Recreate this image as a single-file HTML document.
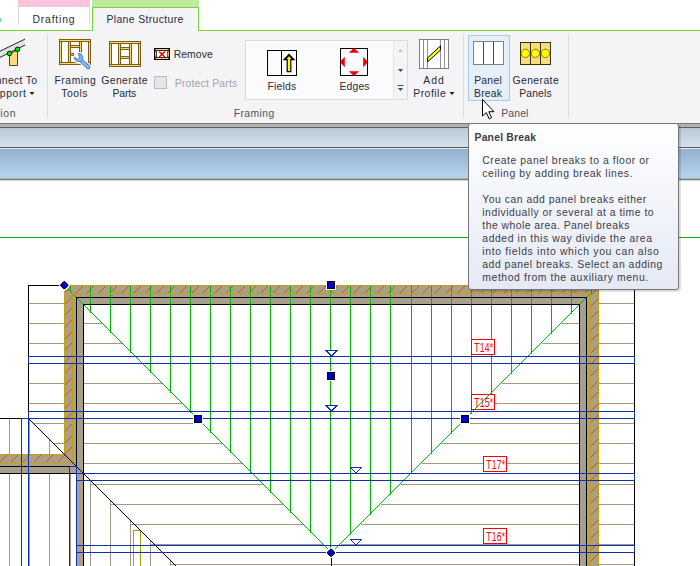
<!DOCTYPE html>
<html><head><meta charset="utf-8"><title>Panel Break</title>
<style>
html,body{margin:0;padding:0;background:#fff;}
body{width:700px;height:566px;overflow:hidden;}
svg{display:block;font-family:"Liberation Sans",sans-serif;}
</style></head><body>
<svg width="700" height="566" viewBox="0 0 700 566">
<defs>
<linearGradient id="g1" x1="0" y1="0" x2="0" y2="1"><stop offset="0" stop-color="#BAC8D8"/><stop offset="1" stop-color="#D6E1EC"/></linearGradient>
<linearGradient id="g2" x1="0" y1="0" x2="0" y2="1"><stop offset="0" stop-color="#93B1D0"/><stop offset="1" stop-color="#B7D4EE"/></linearGradient>
<linearGradient id="g3" x1="0" y1="0" x2="0" y2="1"><stop offset="0" stop-color="#FFFFFF"/><stop offset="1" stop-color="#E4E9F5"/></linearGradient>
<clipPath id="hc"><path d="M65 292L71 286H598V566H591V294H72V462H0V455H65Z"/></clipPath>
</defs>
<rect x="0" y="0" width="700" height="566" fill="#fff"/>
<g id="drawing">
<path d="M0 237.5H700" stroke="#00B400" stroke-width="1" fill="none" />
<path d="M29 303.5H64M29 323.5H64M29 343.5H64M29 363.5H64M29 383.5H64M29 403.5H64M34 423.5H64M54 443.5H64M599 303.5H634M599 323.5H634M599 343.5H634M599 363.5H634M599 383.5H634M599 403.5H634M599 423.5H634M599 443.5H634M599 463.5H634M599 484.5H634M599 504.5H634M599 524.5H634M599 544.5H634M599 564.5H634M84 323.5H101.5M561.5 323.5H579M84 343.5H121.5M541.5 343.5H579M84 363.5H141.5M521.5 363.5H579M84 383.5H161.5M501.5 383.5H579M84 403.5H181.5M481.5 403.5H579M84 423.5H201.5M461.5 423.5H579M84 443.5H221.5M441.5 443.5H579M84 463.5H241.5M421.5 463.5H579M90.6 484.5H262.5M400.5 484.5H579M110.7 504.5H282.5M380.5 504.5H579M130.8 524.5H302.5M360.5 524.5H579M150.9 544.5H322.5M340.5 544.5H579M171 564.5H579M90.5 480V566M110.5 500V566M130.5 520V566M150.5 540V566M170.5 560V566M9.5 419V454M29.5 419V454M49.5 439V454M9.5 474V566M29.5 474V566M49.5 474V566M70.5 474V566" stroke="#A09880" stroke-width="1" fill="none" shape-rendering="crispEdges"/>
<path d="M133.5 530V566M140.5 530V566M133 530.5H141" stroke="#A8A000" stroke-width="1" fill="none" shape-rendering="crispEdges"/>
<g shape-rendering="crispEdges">
<path fill="#A8A08C" d="M64 291L70 285H599V566H579V305H84V566H77V474H0V454H64Z"/>
</g>
<g clip-path="url(#hc)"><path d="M75.5 293.5L83.5 285.5M86.5 293.5L94.5 285.5M98.5 293.5L106.5 285.5M109.5 293.5L117.5 285.5M121.5 293.5L129.5 285.5M133.5 293.5L141.5 285.5M144.5 293.5L152.5 285.5M156.5 293.5L164.5 285.5M167.5 293.5L175.5 285.5M179.5 293.5L187.5 285.5M191.5 293.5L199.5 285.5M202.5 293.5L210.5 285.5M214.5 293.5L222.5 285.5M225.5 293.5L233.5 285.5M237.5 293.5L245.5 285.5M248.5 293.5L256.5 285.5M260.5 293.5L268.5 285.5M272.5 293.5L280.5 285.5M283.5 293.5L291.5 285.5M295.5 293.5L303.5 285.5M306.5 293.5L314.5 285.5M318.5 293.5L326.5 285.5M330.5 293.5L338.5 285.5M341.5 293.5L349.5 285.5M353.5 293.5L361.5 285.5M364.5 293.5L372.5 285.5M376.5 293.5L384.5 285.5M387.5 293.5L395.5 285.5M399.5 293.5L407.5 285.5M411.5 293.5L419.5 285.5M422.5 293.5L430.5 285.5M434.5 293.5L442.5 285.5M445.5 293.5L453.5 285.5M457.5 293.5L465.5 285.5M469.5 293.5L477.5 285.5M480.5 293.5L488.5 285.5M492.5 293.5L500.5 285.5M503.5 293.5L511.5 285.5M515.5 293.5L523.5 285.5M526.5 293.5L534.5 285.5M538.5 293.5L546.5 285.5M550.5 293.5L558.5 285.5M561.5 293.5L569.5 285.5M573.5 293.5L581.5 285.5M584.5 293.5L592.5 285.5M64.5 292.5L72.5 284.5M64.5 304.5L72.5 296.5M64.5 315.5L72.5 307.5M64.5 327.5L72.5 319.5M64.5 339.5L72.5 331.5M64.5 350.5L72.5 342.5M64.5 362.5L72.5 354.5M64.5 373.5L72.5 365.5M64.5 385.5L72.5 377.5M64.5 396.5L72.5 388.5M64.5 408.5L72.5 400.5M64.5 420.5L72.5 412.5M64.5 431.5L72.5 423.5M64.5 443.5L72.5 435.5M64.5 454.5L72.5 446.5M590.5 295.5L598.5 287.5M590.5 306.5L598.5 298.5M590.5 318.5L598.5 310.5M590.5 330.5L598.5 322.5M590.5 341.5L598.5 333.5M590.5 353.5L598.5 345.5M590.5 364.5L598.5 356.5M590.5 376.5L598.5 368.5M590.5 388.5L598.5 380.5M590.5 399.5L598.5 391.5M590.5 411.5L598.5 403.5M590.5 422.5L598.5 414.5M590.5 434.5L598.5 426.5M590.5 446.5L598.5 438.5M590.5 457.5L598.5 449.5M590.5 469.5L598.5 461.5M590.5 480.5L598.5 472.5M590.5 492.5L598.5 484.5M590.5 503.5L598.5 495.5M590.5 515.5L598.5 507.5M590.5 527.5L598.5 519.5M590.5 538.5L598.5 530.5M590.5 550.5L598.5 542.5M590.5 561.5L598.5 553.5M590.5 573.5L598.5 565.5M-0.5 462.5L7.5 454.5M10.5 462.5L18.5 454.5M22.5 462.5L30.5 454.5M33.5 462.5L41.5 454.5M45.5 462.5L53.5 454.5M57.5 462.5L65.5 454.5" stroke="#D05800" stroke-width="1" fill="none" shape-rendering="crispEdges"/></g>
<path d="M90.5 286V312.5M110.5 286V332.5M130.5 286V352.5M150.5 286V372.5M170.5 286V392.5M190.5 286V412.5M210.5 286V432.5M230.5 286V452.5M250.5 286V472.5M270.5 286V492.5M290.5 286V512.5M310.5 286V532.5M330.5 286V552.5M350.5 286V534.5M370.5 286V514.5M390.5 286V494.5M411.5 286V473.5M431.5 286V453.5M451.5 286V433.5M471.5 286V413.5M491.5 286V393.5M511.5 286V373.5M531.5 286V353.5M551.5 286V333.5M571.5 286V313.5M591.5 289V294M70.5 286V291" stroke="#00B400" stroke-width="1" fill="none" shape-rendering="crispEdges"/>
<rect x="471.5" y="339.5" width="23" height="15" fill="#fff" stroke="#FF0000" stroke-width="1" shape-rendering="crispEdges"/><text transform="translate(474.2 351.6) scale(0.72 1)" font-size="12" fill="#FF0000" textLength="26.4" lengthAdjust="spacing">T14*</text>
<rect x="471.5" y="394.5" width="23" height="15" fill="#fff" stroke="#FF0000" stroke-width="1" shape-rendering="crispEdges"/><text transform="translate(474.2 406.6) scale(0.72 1)" font-size="12" fill="#FF0000" textLength="26.4" lengthAdjust="spacing">T15*</text>
<rect x="483.5" y="456.5" width="23" height="15" fill="#fff" stroke="#FF0000" stroke-width="1" shape-rendering="crispEdges"/><text transform="translate(486.2 468.6) scale(0.72 1)" font-size="12" fill="#FF0000" textLength="26.4" lengthAdjust="spacing">T17*</text>
<rect x="483.5" y="528.5" width="23" height="15" fill="#fff" stroke="#FF0000" stroke-width="1" shape-rendering="crispEdges"/><text transform="translate(486.2 540.6) scale(0.72 1)" font-size="12" fill="#FF0000" textLength="26.4" lengthAdjust="spacing">T16*</text>
<path d="M66.5 287.5L331.5 552.5M331.5 552.5L591.5 292.5" stroke="#00B400" stroke-width="1" fill="none" shape-rendering="crispEdges"/>
<path d="M65.5 291.5L70.5 286.5" stroke="#D05800" stroke-width="1" shape-rendering="crispEdges"/>
<path d="M70 285.5H599M64.5 291.5L70.5 285.5M64.5 291V455M0 454.5H65M598.5 285V566M72 293.5H591M72.5 293V463M0 462.5H73M590.5 293V566" stroke="#C8A000" stroke-width="1" fill="none" shape-rendering="crispEdges"/>
<path d="M76 297.5H587M76.5 297V467M0 466.5H77M586.5 297V566M83 304.5H580M83.5 304V566M579.5 304V566M0 473.5H77M28.5 285V419M28 285.5H60M0 418.5H22M634.5 285V566M599 285.5H635M28.5 418.5L177 567M331.5 558V566" stroke="#000000" stroke-width="1" fill="none" shape-rendering="crispEdges"/>
<path d="M28 356.5H635M28 363.5H635M28.5 356V364M634.5 356V364M28 411.5H635M21 418.5H635M634.5 411V419M21.5 418V566M28.5 411V566M76 473.5H635M76 480.5H635M634.5 473V481M76 545.5H635M76 552.5H635M634.5 545V553M69 466.5H77M69.5 466V566M76.5 466V566" stroke="#1030B0" stroke-width="1" fill="none" shape-rendering="crispEdges"/>
<path d="M325.9 350.5H336.9L331.4 356Z" fill="#fff" stroke="#1030B0" stroke-width="1" shape-rendering="crispEdges"/>
<path d="M325.9 405.5H336.9L331.4 411Z" fill="#fff" stroke="#1030B0" stroke-width="1" shape-rendering="crispEdges"/>
<path d="M350.5 467.5H361.5L356 473Z" fill="#fff" stroke="#1030B0" stroke-width="1" shape-rendering="crispEdges"/>
<path d="M350.5 539.5H361.5L356 545Z" fill="#fff" stroke="#1030B0" stroke-width="1" shape-rendering="crispEdges"/>
<g shape-rendering="crispEdges"><rect x="326" y="280" width="10" height="10" fill="#fff"/><rect x="327.5" y="281.5" width="7" height="7" fill="#0000CC" stroke="#000" stroke-width="1"/><rect x="326" y="371" width="10" height="10" fill="#fff"/><rect x="327.5" y="372.5" width="7" height="7" fill="#0000CC" stroke="#000" stroke-width="1"/><rect x="193" y="414" width="10" height="10" fill="#fff"/><rect x="194.5" y="415.5" width="7" height="7" fill="#0000CC" stroke="#000" stroke-width="1"/><rect x="460" y="414" width="10" height="10" fill="#fff"/><rect x="461.5" y="415.5" width="7" height="7" fill="#0000CC" stroke="#000" stroke-width="1"/></g>
<circle cx="64.3" cy="285.2" r="5" fill="#fff"/><polygon points="60.8,284.5 63.6,281.7 65,281.7 67.8,284.5 67.8,285.9 65,288.7 63.6,288.7 60.8,285.9" fill="#0000CC" stroke="#000" stroke-width="1" stroke-linejoin="round"/>
<circle cx="331" cy="552.8" r="5" fill="#fff"/><polygon points="327.5,552.1 330.3,549.3 331.7,549.3 334.5,552.1 334.5,553.5 331.7,556.3 330.3,556.3 327.5,553.5" fill="#0000CC" stroke="#000" stroke-width="1" stroke-linejoin="round"/>
</g>
<g id="bands">
<rect x="0" y="123" width="700" height="5" fill="#B2B2B2"/>
<rect x="0" y="123" width="700" height="1" fill="#7A7A7A"/>
<rect x="0" y="127" width="700" height="1.4" fill="#606060"/>
<rect x="0" y="128.4" width="700" height="18.6" fill="url(#g1)"/>
<rect x="0" y="147" width="700" height="1" fill="#555"/>
<rect x="0" y="148" width="700" height="1" fill="#E8EEF5"/>
<rect x="0" y="149" width="700" height="29.5" fill="url(#g2)"/>
<rect x="0" y="178.5" width="700" height="1.5" fill="#7C7C7C"/>
<rect x="0" y="180" width="700" height="0.7" fill="#C8C8C8"/>
</g>
<g id="ribbon">
<rect x="0" y="0" width="700" height="31" fill="#fff"/>
<rect x="0" y="31" width="700" height="92" fill="#F4F4F6"/>
<rect x="18" y="0" width="72" height="7" fill="#FDC3DD"/>
<rect x="92" y="0" width="107" height="8" fill="#BDEB9A"/>
<rect x="18" y="7" width="1" height="18" fill="#D8D8D8"/><rect x="89" y="7" width="1" height="18" fill="#D8D8D8"/>
<path d="M92.5 31V7.5H198.5V31" fill="#F4F4F6" stroke="#7DD240" stroke-width="1" shape-rendering="crispEdges"/>
<path d="M0 30.5H93M198 30.5H700" stroke="#7DD240" stroke-width="1" shape-rendering="crispEdges"/>
<rect x="0" y="18" width="1.5" height="4" fill="#7FD0F0"/>
<text x="32.5" y="23" font-size="10.4" fill="#2B2B38" textLength="42">Drafting</text>
<text x="106.4" y="23" font-size="10.4" fill="#2B2B38" textLength="77">Plane Structure</text>
<path d="M47.5 33V119M463.5 33V119M568.5 33V119" stroke="#DCDDDF" stroke-width="1" shape-rendering="crispEdges"/>
<text x="-4.3" y="84.2" font-size="10.4" fill="#2B2B38" textLength="41.3">nnect To</text>
<text x="-0.2" y="97" font-size="10.4" fill="#2B2B38" textLength="26.2">pport</text>
<path d="M29.5 92H34.5L32 95Z" fill="#222"/>
<text x="-3.2" y="116.5" font-size="10.4" fill="#55505F" textLength="18.7">tion</text>
<path d="M0 51.2L25 39.1V45.1L0 57.4Z" fill="#E3E3E3"/>
<path d="M0 51.2L25 39.1M0 57.4L25 45.1" stroke="#222" stroke-width="1" fill="none"/>
<path d="M9.5 54L17.5 50V65.5H9.5Z" fill="#FBDC7F" stroke="#5A4010" stroke-width="1"/>
<circle cx="9.5" cy="53.4" r="2.3" fill="#00E000" stroke="#002800" stroke-width="1"/>
<circle cx="17.5" cy="49.3" r="2.3" fill="#00E000" stroke="#002800" stroke-width="1"/>
<g fill="#F7DC72" stroke="#7A5C14" stroke-width="1" shape-rendering="crispEdges"><rect x="59.5" y="39.5" width="31" height="25" fill="#fff"/><rect x="59.5" y="39.5" width="2" height="25"/><rect x="68.5" y="39.5" width="2" height="25"/><rect x="79.5" y="39.5" width="2" height="25"/><rect x="88.5" y="39.5" width="2" height="25"/><rect x="70.5" y="45.5" width="9" height="2"/><rect x="70.5" y="53.5" width="3" height="2"/><rect x="59.5" y="39.5" width="31" height="2"/><rect x="59.5" y="62.5" width="31" height="2"/></g>
<path d="M88.3 67.3L80.5 60" stroke="#F8F9FB" stroke-width="6.4" stroke-linecap="round"/>
<path d="M78.2 53.6L80.8 53.8Q83.6 56 82.6 59.6L80.8 61.6Q77 62.4 74.6 59.6L74.4 57.2L77.6 59.2L79.6 57.4Z" fill="#F8F9FB" stroke="#F8F9FB" stroke-width="3.2" stroke-linejoin="round"/>
<path d="M88.3 67.3L80.5 60" stroke="#3F7FC4" stroke-width="4.2" stroke-linecap="round"/>
<path d="M88.3 67.3L80.5 60" stroke="#8DBBEA" stroke-width="2.4" stroke-linecap="round"/>
<path d="M78.2 53.6L80.8 53.8Q83.6 56 82.6 59.6L80.8 61.6Q77 62.4 74.6 59.6L74.4 57.2L77.6 59.2L79.6 57.4Z" fill="#7FB0E6" stroke="#3F7FC4" stroke-width="0.9"/>
<text x="54.5" y="84.2" font-size="10.4" fill="#2B2B38" textLength="41.2">Framing</text>
<text x="61.2" y="97" font-size="10.4" fill="#2B2B38" textLength="26.3">Tools</text>
<g fill="#F7DC72" stroke="#7A5C14" stroke-width="1" shape-rendering="crispEdges"><rect x="109.5" y="41.5" width="31" height="25" fill="#fff"/><rect x="109.5" y="41.5" width="2" height="25"/><rect x="118.5" y="41.5" width="2" height="25"/><rect x="129.5" y="41.5" width="2" height="25"/><rect x="138.5" y="41.5" width="2" height="25"/><rect x="120.5" y="47.5" width="9" height="2"/><rect x="120.5" y="56.5" width="9" height="2"/><rect x="109.5" y="41.5" width="31" height="2"/><rect x="109.5" y="64.5" width="31" height="2"/></g>
<text x="101.2" y="84.2" font-size="10.4" fill="#2B2B38" textLength="46.3">Generate</text>
<text x="112.5" y="97" font-size="10.4" fill="#2B2B38" textLength="23.7">Parts</text>
<rect x="154" y="48" width="16" height="12" fill="#000"/><path d="M155.5 49.6H168.5M155.5 58.4H168.5M155.7 51.2V56.8M168.3 51.2V56.8" stroke="#F7C878" stroke-width="1.2"/><rect x="157" y="51" width="10.2" height="6" fill="#fff"/><path d="M159.2 51.5L164.8 57M164.8 51.5L159.2 57" stroke="#F00000" stroke-width="1.5"/>
<text x="173.7" y="57.8" font-size="10.4" fill="#2B2B38" textLength="39">Remove</text>
<rect x="154.5" y="76.5" width="12" height="12" fill="#E6E6E6" stroke="#BCBCBC" shape-rendering="crispEdges"/>
<text x="174.7" y="86.5" font-size="10.4" fill="#A3A3AB" textLength="62.6">Protect Parts</text>
<rect x="245.5" y="40.5" width="162" height="59" fill="#FAFBFC" stroke="#DADBDC" shape-rendering="crispEdges"/>
<rect x="394" y="41" width="13" height="58" fill="#F4F4F6"/>
<path d="M393.5 41V99" stroke="#E4E5E7" shape-rendering="crispEdges"/>
<path d="M398 52H403L400.5 49Z" fill="#C0C4CC"/>
<path d="M398 69H403L400.5 72Z" fill="#3A4A6A"/>
<path d="M398 88H403L400.5 91Z" fill="#3A4A6A"/><path d="M397.5 85.5H403.5" stroke="#3A4A6A"/>
<g shape-rendering="crispEdges"><rect x="267.5" y="50.5" width="29" height="25" fill="#FBFBFC" stroke="#000"/><path d="M281.5 50V76" stroke="#000"/></g>
<path d="M289 53.4L295.4 60.2H291.4V72.2H286.6V60.2H282.6Z" fill="#000"/>
<path d="M289 56.2L291.6 59H290.2V71H287.8V59H286.4Z" fill="#FFFF00"/>
<text x="267.5" y="90" font-size="10.4" fill="#2B2B38" textLength="28.7">Fields</text>
<rect x="340.5" y="48.5" width="27" height="27" fill="#FBFBFC" stroke="#000" shape-rendering="crispEdges"/>
<path d="M348.8 52.8H359.2L354 48ZM348.8 71.2H359.2L354 76ZM344.8 56.8V67.2L340 62ZM363.2 56.8V67.2L368 62Z" fill="#F00000"/>
<text x="339.5" y="90" font-size="10.4" fill="#2B2B38" textLength="30">Edges</text>
<g shape-rendering="crispEdges"><rect x="419.5" y="39.5" width="29" height="29" fill="#fff" stroke="#808080"/><path d="M423.5 40V68M427.5 40V68M440.5 40V68M444.5 40V68" stroke="#909090"/></g>
<path d="M427.6 57.9L440.5 45.9V50.1L427.6 61.9Z" fill="#FFFF00" stroke="#000" stroke-width="1" stroke-linejoin="round"/>
<text x="423.2" y="84.2" font-size="10.4" fill="#2B2B38" textLength="20.5">Add</text>
<text x="413.2" y="97" font-size="10.4" fill="#2B2B38" textLength="32.5">Profile</text>
<path d="M449.5 92H454.5L452 95Z" fill="#222"/>
<rect x="468.5" y="35.5" width="41" height="65" fill="#E5EFF9" stroke="#A9CDF2" shape-rendering="crispEdges"/>
<g shape-rendering="crispEdges"><rect x="473.5" y="41.5" width="30" height="23" fill="#fff" stroke="#808080"/><path d="M483.5 42V64M493.5 42V64" stroke="#F00000"/></g>
<text x="474.2" y="84.2" font-size="10.4" fill="#2B2B38" textLength="27.5">Panel</text>
<text x="474" y="97" font-size="10.4" fill="#2B2B38" textLength="28">Break</text>
<g shape-rendering="crispEdges"><rect x="520.5" y="42.5" width="30" height="22" fill="#F7DC80" stroke="#3A3000"/><path d="M530.5 43V64M540.5 43V64" stroke="#3A3000"/></g>
<circle cx="525.4" cy="53.4" r="4.2" fill="#FFFF00" stroke="#8A7A00" stroke-width="1"/>
<circle cx="535.4" cy="53.4" r="4.2" fill="#FFFF00" stroke="#8A7A00" stroke-width="1"/>
<circle cx="545.4" cy="53.4" r="4.2" fill="#FFFF00" stroke="#8A7A00" stroke-width="1"/>
<text x="512.5" y="84.2" font-size="10.4" fill="#2B2B38" textLength="46.2">Generate</text>
<text x="519.2" y="97" font-size="10.4" fill="#2B2B38" textLength="32.5">Panels</text>
<text x="233.7" y="116.5" font-size="10.4" fill="#55505F" textLength="40.5">Framing</text>
<text x="501.2" y="116.5" font-size="10.4" fill="#55505F" textLength="27.2">Panel</text>
</g>
<g id="tooltip">
<rect x="470" y="125" width="211" height="167" rx="3" fill="#000" opacity="0.08"/>
<rect x="469.5" y="124.5" width="211" height="167" rx="3" fill="#000" opacity="0.07"/>
<rect x="468.5" y="123.5" width="210" height="166" rx="2.5" fill="url(#g3)" stroke="#767676" stroke-width="1"/>
<text x="474.5" y="141" font-size="10.4" fill="#3C3C46" textLength="61.5" font-weight="bold">Panel Break</text>
<text x="482.3" y="164" font-size="10.4" fill="#3C3C46" textLength="166.7">Create panel breaks to a floor or</text>
<text x="482.3" y="177" font-size="10.4" fill="#3C3C46" textLength="150.2">ceiling by adding break lines.</text>
<text x="482.3" y="203" font-size="10.4" fill="#3C3C46" textLength="164">You can add panel breaks either</text>
<text x="482.3" y="216" font-size="10.4" fill="#3C3C46" textLength="171.3">individually or several at a time to</text>
<text x="482.3" y="229" font-size="10.4" fill="#3C3C46" textLength="147.1">the whole area. Panel breaks</text>
<text x="482.3" y="242" font-size="10.4" fill="#3C3C46" textLength="169.7">added in this way divide the area</text>
<text x="482.3" y="255" font-size="10.4" fill="#3C3C46" textLength="176.6">into fields into which you can also</text>
<text x="482.3" y="268" font-size="10.4" fill="#3C3C46" textLength="180.1">add panel breaks. Select an adding</text>
<text x="482.3" y="281" font-size="10.4" fill="#3C3C46" textLength="165.9">method from the auxiliary menu.</text>
</g>
<path d="M482.5 99.5V116L486.3 112.6L489.2 118.8L491.6 117.7L488.8 111.7H494Z" fill="#fff" stroke="#000" stroke-width="1" stroke-linejoin="miter"/>
</svg>
</body></html>
